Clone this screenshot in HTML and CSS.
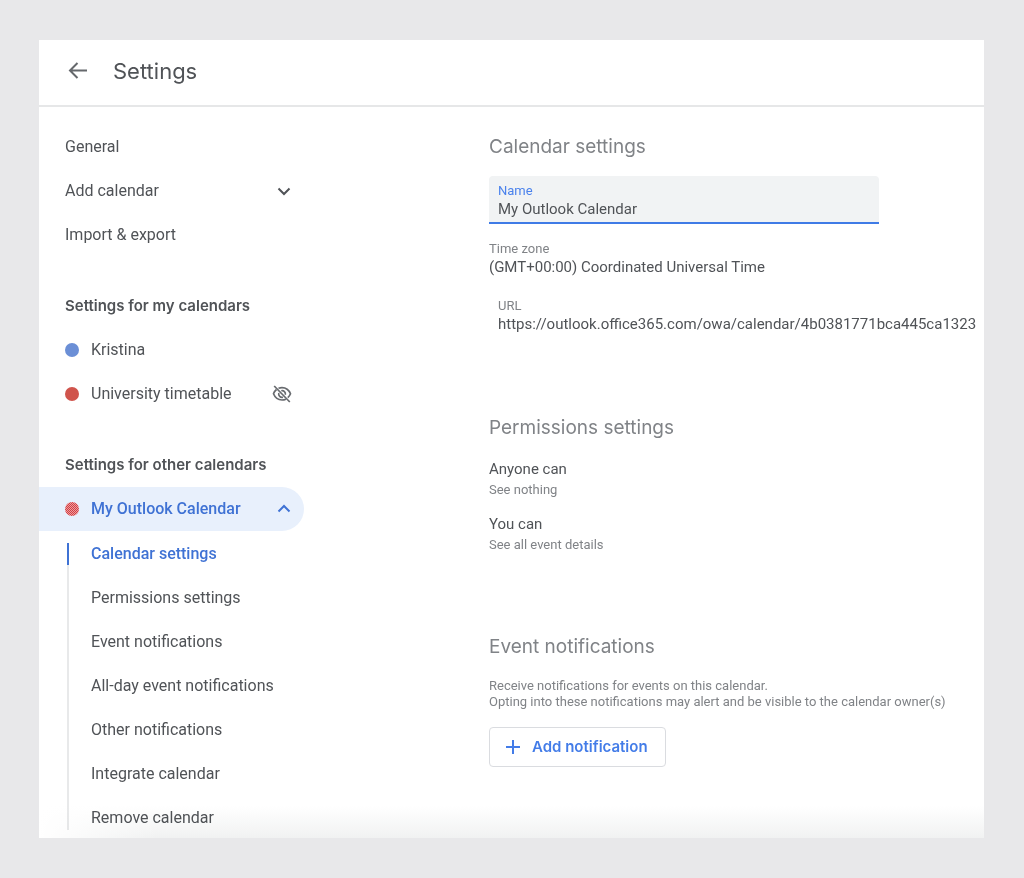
FILE: index.html
```html
<!DOCTYPE html>
<html lang="en">
<head>
<meta charset="utf-8">
<meta name="viewport" content="width=device-width, initial-scale=1">
<title>Settings</title>
<link rel="stylesheet" href="styles.css">
</head>
<body>
<div class="card">
  <header class="topbar">
    <button class="back" type="button" aria-label="Back">
      <svg width="20" height="20" viewBox="0 0 20 20" fill="none" stroke="currentColor" stroke-width="2"><path d="M19 9.500H2.500M9.500 2L2 9.500l7.500 7.500"/></svg>
    </button>
    <h1 class="title">Settings</h1>
  </header>
  <div class="columns">
    <nav class="sidebar" aria-label="Settings">
      <a class="row" href="#general">General</a>
      <button class="row" type="button" aria-expanded="false">Add calendar
        <svg class="chevron" width="14" height="14" viewBox="0 0 14 14" fill="none" stroke="currentColor" stroke-width="2"><path d="M1.500 4.500L7 10l5.500-5.500"/></svg>
      </button>
      <a class="row" href="#import">Import &amp; export</a>

      <h2 class="group">Settings for my calendars</h2>
      <a class="row" href="#kristina"><span class="dot dot-blue"></span>Kristina</a>
      <a class="row" href="#university"><span class="dot dot-red"></span>University timetable
        <svg class="hidden-icon" width="20" height="18" viewBox="0 0 20 18" fill="none" stroke="currentColor" stroke-width="1.700"><path d="M6.500 3.200C7.600 2.800 8.800 2.600 10 2.600c4 0 7 2.500 8.500 6.200-.6 1.500-1.500 2.800-2.700 3.800M4.500 4.500C3.200 5.500 2.100 7 1.500 8.800 3 12.500 6 15 10 15c1.400 0 2.700-.3 3.900-.8"/><path d="M9.300 5.700a3.300 3.300 0 0 1 4 4M6.800 8a3.400 3.400 0 0 0 4.200 4.200"/><path d="M2.200 1l15.600 16"/></svg>
      </a>

      <h2 class="group">Settings for other calendars</h2>
      <button class="row active" type="button" aria-expanded="true"><span class="dot dot-check"></span>My Outlook Calendar
        <svg class="chevron" width="14" height="14" viewBox="0 0 14 14" fill="none" stroke="currentColor" stroke-width="2"><path d="M1.500 9.500L7 4l5.500 5.500"/></svg>
      </button>
      <ul class="sub">
        <li><a class="sub-link current" href="#calendar-settings">Calendar settings</a></li>
        <li><a class="sub-link" href="#permissions">Permissions settings</a></li>
        <li><a class="sub-link" href="#events">Event notifications</a></li>
        <li><a class="sub-link" href="#all-day">All-day event notifications</a></li>
        <li><a class="sub-link" href="#other">Other notifications</a></li>
        <li><a class="sub-link" href="#integrate">Integrate calendar</a></li>
        <li><a class="sub-link" href="#remove">Remove calendar</a></li>
      </ul>
    </nav>
    <main class="main">
      <section class="section" id="calendar-settings">
        <h2 class="heading">Calendar settings</h2>
        <div class="field field-name">
          <label class="label" for="name">Name</label>
          <input class="input" id="name" type="text" value="My Outlook Calendar">
        </div>
        <div class="zone">
          <div class="label">Time zone</div>
          <div class="value">(GMT+00:00) Coordinated Universal Time</div>
        </div>
        <div class="field">
          <label class="label" for="url">URL</label>
          <input class="input" id="url" type="text" readonly value="https://outlook.office365.com/owa/calendar/4b0381771bca445ca1323">
        </div>
      </section>
      <section class="section" id="permissions">
        <h2 class="heading">Permissions settings</h2>
        <dl class="permissions">
          <div><dt class="value">Anyone can</dt><dd class="note">See nothing</dd></div>
          <div><dt class="value">You can</dt><dd class="note">See all event details</dd></div>
        </dl>
      </section>
      <section class="section" id="events">
        <h2 class="heading">Event notifications</h2>
        <p class="description">Receive notifications for events on this calendar.<br>Opting into these notifications may alert and be visible to the calendar owner(s)</p>
        <button class="add" type="button">
          <svg width="14" height="14" viewBox="0 0 14 14" fill="none" stroke="currentColor" stroke-width="2"><path d="M7 0v14M0 7h14"/></svg>
          Add notification
        </button>
      </section>
    </main>
  </div>
</div>
</body>
</html>
```
FILE: styles.css
```css
* {
  box-sizing: border-box;
}

body {
  margin: 0;
  padding: 40px 40px 40px 39px;
  background: #e8e8ea;
  color: #505357;
  font-family: Roboto, "Liberation Sans", sans-serif;
  font-size: 16px;
  line-height: 20px;
}

h1, h2, p, ul, dl, dd {
  margin: 0;
  padding: 0;
}

ul {
  list-style: none;
}

button, input {
  font: inherit;
  color: inherit;
  background: none;
  border: 0;
  padding: 0;
}

a {
  color: inherit;
  text-decoration: none;
}

.card {
  position: relative;
  min-height: calc(100vh - 80px);
  background: #fff;
  overflow: hidden;
}

.card::after {
  content: "";
  position: absolute;
  inset: auto 0 0 0;
  height: 32px;
  background: linear-gradient(to right, #fff, transparent 120px), linear-gradient(to bottom, #fff, #f1f2f2);
  mix-blend-mode: multiply;
  pointer-events: none;
}

.topbar {
  display: flex;
  align-items: center;
  gap: 25px;
  height: 67px;
  padding: 0 29px 3px;
  border-bottom: 2px solid #e6e7e8;
}

.back {
  display: flex;
  color: #65686c;
}

.title {
  font-family: Inter, sans-serif;
  font-size: 22px;
  font-weight: 400;
  line-height: 28px;
}

.columns {
  display: flex;
  padding-top: 18px;
}

.sidebar {
  flex: 0 0 265px;
  margin-right: 185px;
}

.row, .group {
  display: flex;
  align-items: center;
  width: 100%;
  height: 44px;
  padding: 0 12px 0 26px;
  text-align: left;
}

.group {
  margin-top: 27px;
  font-family: Inter, sans-serif;
  font-size: 15px;
  font-weight: 600;
}

.chevron, .hidden-icon {
  margin-left: auto;
}

.hidden-icon {
  color: #686b6f;
}

.chevron {
  margin-right: 1px;
}

.dot {
  width: 14px;
  height: 14px;
  margin-right: 12px;
  border-radius: 50%;
}

.dot-blue {
  background: #6b8fd6;
}

.dot-red {
  background: #d0544c;
}

.dot-check {
  background: repeating-conic-gradient(#d83c40 0 25%, #e8a0a2 0 50%) 0 0 / 2px 2px;
}

.active {
  border-radius: 0 22px 22px 0;
  background: #e8f0fc;
  color: #3f72d4;
  font-weight: 500;
}

.sub {
  margin: 1px 0 0 28px;
}

.sub li {
  display: flex;
  align-items: center;
  height: 44px;
  background: linear-gradient(#e8e9ea, #e8e9ea) 0 0 / 2px 100% no-repeat;
}

.sub li:first-child {
  background-position: 0 11px;
}

.sub li:last-child {
  align-items: flex-start;
  height: 42px;
  padding-top: 11px;
  background-size: 2px 34px;
}

.sub-link {
  display: block;
  padding-left: 24px;
  line-height: 22px;
}

.current {
  border-left: 2px solid #3f72d4;
  padding-left: 22px;
  color: #3f72d4;
  font-weight: 500;
}

.main {
  flex: 1;
  min-width: 0;
  padding-top: 8px;
}

.heading {
  font-family: Inter, sans-serif;
  font-size: 19px;
  font-weight: 400;
  line-height: 28px;
  color: #808387;
}

.label, .note, .description {
  font-size: 13px;
  line-height: 16px;
  color: #808387;
}

.label {
  display: block;
}

.value, .input {
  font-size: 15px;
  line-height: 20px;
}

.field {
  padding: 7px 0 3px 9px;
}

.input {
  display: block;
  width: 100%;
  height: 20px;
  outline: 0;
}

.field-name {
  max-width: 390px;
  margin: 15px 0 17px;
  border-bottom: 2px solid #3f7be6;
  border-radius: 4px 4px 0 0;
  background: #f1f3f4;
}

.field-name .label {
  color: #4b82ec;
}

.zone {
  margin-bottom: 14px;
}

.section + .section {
  margin-top: 77px;
}

.permissions {
  display: grid;
  gap: 16px;
  margin-top: 17px;
  padding-bottom: 3px;
}

.note {
  margin-top: 3px;
}

.description {
  margin-top: 17px;
}

.add {
  display: flex;
  align-items: center;
  gap: 12px;
  height: 40px;
  margin-top: 17px;
  padding: 0 17px 0 16px;
  border: 1px solid #dadce0;
  border-radius: 4px;
  color: #437ce8;
  font-family: Inter, sans-serif;
  font-size: 15px;
  font-weight: 600;
}
```
